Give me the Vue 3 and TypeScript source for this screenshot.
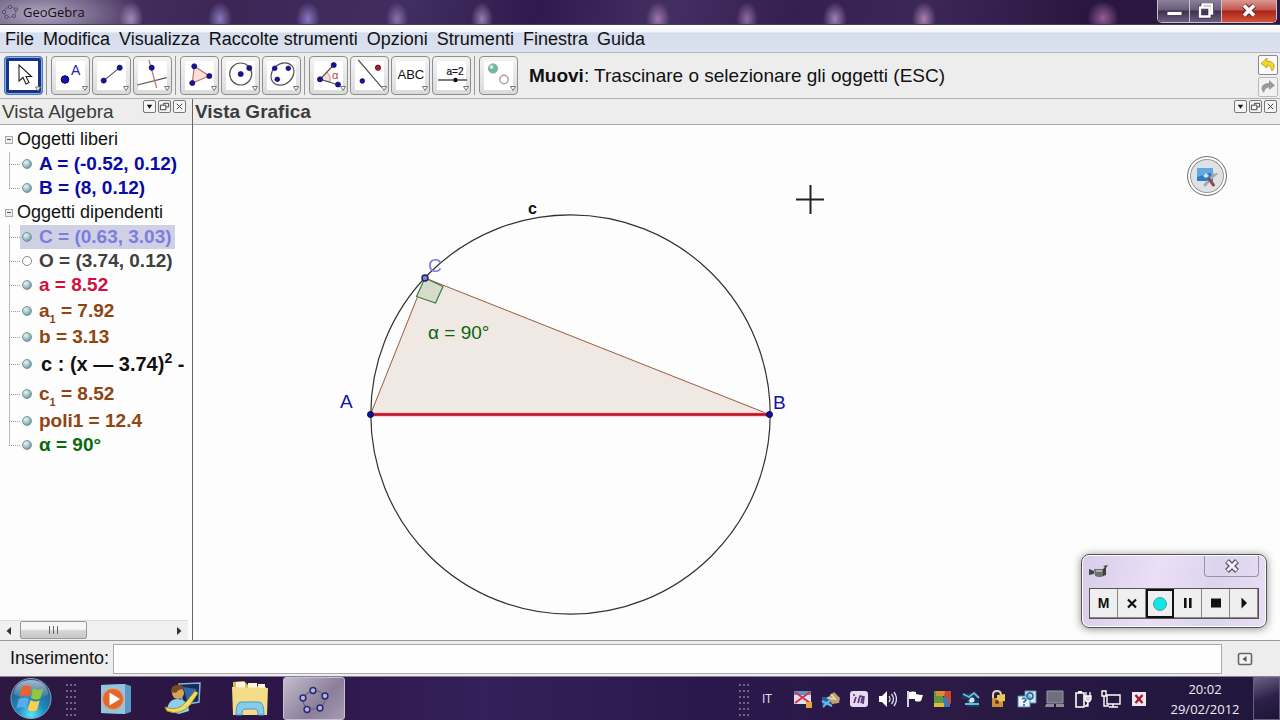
<script setup lang="ts">
import { ref } from 'vue'

interface AlgebraItem {
  name: string
  sub?: string
  value: string
  sup?: string
  tail?: string
  color: string
  hidden?: boolean
  selected?: boolean
  tall?: 'sub' | 'sup'
  math?: boolean
}

interface AlgebraGroup {
  title: string
  items: AlgebraItem[]
}

const menus: string[] = ['File', 'Modifica', 'Visualizza', 'Raccolte strumenti', 'Opzioni', 'Strumenti', 'Finestra', 'Guida']

const groups: AlgebraGroup[] = [
  {
    title: 'Oggetti liberi',
    items: [
      { name: 'A', value: ' = (-0.52, 0.12)', color: '#0a0aa4' },
      { name: 'B', value: ' = (8, 0.12)', color: '#0a0aa4' },
    ],
  },
  {
    title: 'Oggetti dipendenti',
    items: [
      { name: 'C', value: ' = (0.63, 3.03)', color: '#7d7de0', selected: true },
      { name: 'O', value: ' = (3.74, 0.12)', color: '#404040', hidden: true },
      { name: 'a', value: ' = 8.52', color: '#d01040' },
      { name: 'a', sub: '1', value: ' = 7.92', color: '#8f4512', tall: 'sub' },
      { name: 'b', value: ' = 3.13', color: '#8f4512' },
      { name: 'c', value: ' : (x — 3.74)', sup: '2', tail: ' -', color: '#111', tall: 'sup', math: true },
      { name: 'c', sub: '1', value: ' = 8.52', color: '#8f4512', tall: 'sup' },
      { name: 'poli1', value: ' = 12.4', color: '#8f4512' },
      { name: 'α', value: ' = 90°', color: '#0a6a0a' },
    ],
  },
]

const command = ref('')
</script>

<template>
  <div class="desktop">
    <header class="titlebar">
      <svg class="app-icon" viewBox="0 0 18 16" aria-hidden="true">
        <ellipse cx="9" cy="8" rx="6" ry="5" fill="none" stroke="#6b6478" transform="rotate(-15 9 8)" />
        <g fill="#9a92a8" stroke="#544c60">
          <circle cx="3" cy="8" r="1.6" /><circle cx="9" cy="3" r="1.6" /><circle cx="15" cy="5.500" r="1.6" />
          <circle cx="13" cy="12" r="1.6" /><circle cx="5.500" cy="13" r="1.6" />
        </g>
      </svg>
      <span class="title">GeoGebra</span>
      <div class="window-buttons">
        <button class="wb min" type="button" aria-label="Riduci a icona">
          <svg viewBox="0 0 20 16"><rect x="3" y="8.500" width="15" height="4" fill="#fff" stroke="#3a3048" stroke-width=".8" /></svg>
        </button>
        <button class="wb max" type="button" aria-label="Ripristina">
          <svg viewBox="0 0 20 16"><path d="M6.500 4V1.500h9.500v9h-2.500M4 4.500h9.500v9H4z" fill="none" stroke="#3a3048" stroke-width="4" /><path d="M6.500 4V1.500h9.500v9h-2.500M4 4.500h9.500v9H4z" fill="none" stroke="#fff" stroke-width="2.400" /></svg>
        </button>
        <button class="wb close" type="button" aria-label="Chiudi">
          <svg viewBox="0 0 20 16"><path d="M5 2.500l10 10M15 2.500l-10 10" stroke="#5b2020" stroke-width="5.400" /><path d="M5 2.500l10 10M15 2.500l-10 10" stroke="#fff" stroke-width="3.800" /></svg>
        </button>
      </div>
    </header>

    <nav class="menubar">
      <button v-for="m in menus" :key="m" class="menu" type="button">{{ m }}</button>
    </nav>

    <div class="toolbar">
      <div class="tools">
        <div class="group">
          <button class="tool active" type="button" aria-label="Muovi">
            <svg viewBox="0 0 37 37"><path d="M14 8v16l4-3.500 3 6.500 3-1.500-3-6h5.500z" fill="#fff" stroke="#222" stroke-width="1.100" /><path class="more" d="M30.500 30h5l-2.500 4z" /></svg>
          </button>
        </div>
        <div class="group">
          <button class="tool" type="button" aria-label="Nuovo punto">
            <svg viewBox="0 0 37 37"><circle cx="13" cy="22.500" r="3.800" fill="#1414b4" stroke="#000050" /><text x="19" y="18" font-size="14" fill="#2222b0">A</text><path class="more" d="M30.500 29.500h5l-2.500 4z" /></svg>
          </button>
          <button class="tool" type="button" aria-label="Retta">
            <svg viewBox="0 0 37 37"><path class="ln" d="M10.700 23.600l16-13" /><circle class="pt" cx="10.700" cy="23.600" r="2.600" /><circle class="pt" cx="26.700" cy="10.700" r="2.600" /><path class="more" d="M30.500 29.500h5l-2.500 4z" /></svg>
          </button>
          <button class="tool" type="button" aria-label="Retta perpendicolare">
            <svg viewBox="0 0 37 37"><path class="ln" d="M3.300 28l29.400-7.300" /><path d="M15 3l7.700 28" stroke="#c07868" stroke-width="1.200" /><circle class="pt" cx="17.700" cy="10.700" r="2.600" /><path class="more" d="M30.500 29.500h5l-2.500 4z" /></svg>
          </button>
        </div>
        <div class="group">
          <button class="tool" type="button" aria-label="Poligono">
            <svg viewBox="0 0 37 37"><path d="M13.300 9.300L28.300 19l-17 7z" fill="#fbe0dc" stroke="#c07070" stroke-width="1.200" /><circle class="pt" cx="13.300" cy="9.300" r="2.600" /><circle class="pt" cx="28.300" cy="19" r="2.600" /><circle class="pt" cx="11.300" cy="26" r="2.600" /><path class="more" d="M30.500 29.500h5l-2.500 4z" /></svg>
          </button>
          <button class="tool" type="button" aria-label="Circonferenza">
            <svg viewBox="0 0 37 37"><circle class="ln" cx="18.700" cy="17" r="11" /><circle class="pt" cx="18.700" cy="17" r="2.600" /><circle class="pt" cx="27.300" cy="11" r="2.600" /><path class="more" d="M30.500 29.500h5l-2.500 4z" /></svg>
          </button>
          <button class="tool" type="button" aria-label="Conica">
            <svg viewBox="0 0 37 37"><ellipse class="ln" cx="19.500" cy="17" rx="12.500" ry="10" transform="rotate(-42 19.500 17)" /><circle class="pt" cx="11.700" cy="11.300" r="2.400" /><circle class="pt" cx="25.300" cy="11.300" r="2.400" /><circle class="pt" cx="14.300" cy="22.300" r="2.400" /><path class="more" d="M30.500 29.500h5l-2.500 4z" /></svg>
          </button>
        </div>
        <div class="group">
          <button class="tool" type="button" aria-label="Angolo">
            <svg viewBox="0 0 37 37"><path d="M10 22.300l7-7.300q4.500 4 3 10z" fill="#fbdcd8" stroke="#d09090" /><path class="ln" d="M23.700 8L10 22.300l18 5.400" /><text x="22" y="21.500" font-size="11" fill="#c04040">α</text><circle class="pt" cx="10" cy="22.300" r="2.600" /><circle class="pt" cx="23.700" cy="8" r="2.600" /><circle class="pt" cx="28" cy="27.500" r="2.600" /><path class="more" d="M30.500 29.500h5l-2.500 4z" /></svg>
          </button>
          <button class="tool" type="button" aria-label="Simmetria assiale">
            <svg viewBox="0 0 37 37"><path class="ln" d="M7.300 3l23.400 27.300" /><circle cx="27" cy="10.700" r="2.600" fill="#a82030" stroke="#701020" /><circle class="pt" cx="11.300" cy="24" r="2.400" /><path class="more" d="M30.500 29.500h5l-2.500 4z" /></svg>
          </button>
          <button class="tool" type="button" aria-label="Testo">
            <svg viewBox="0 0 37 37"><text x="5.500" y="21.500" font-size="13" fill="#111">ABC</text><path class="more" d="M30.500 29.500h5l-2.500 4z" /></svg>
          </button>
          <button class="tool" type="button" aria-label="Slider">
            <svg viewBox="0 0 37 37"><text x="13.500" y="18" font-size="10" fill="#111" stroke="#111" stroke-width=".2">a=2</text><path d="M5 23h29" stroke="#222" stroke-width="1.200" /><circle cx="22.500" cy="23" r="2.200" fill="#111" /><path class="more" d="M30.500 29.500h5l-2.500 4z" /></svg>
          </button>
        </div>
        <div class="group">
          <button class="tool" type="button" aria-label="Mostra oggetto">
            <svg viewBox="0 0 37 37"><circle cx="13" cy="11.500" r="4.600" fill="#6db8a4" stroke="#8fa8a0" /><circle cx="11.500" cy="10" r="2" fill="#c8ece2" /><circle cx="24" cy="22.500" r="4.200" fill="#fff" stroke="#a8a098" stroke-width="1.400" /><path class="more" d="M30.500 29.500h5l-2.500 4z" /></svg>
          </button>
        </div>
      </div>
      <p class="tool-help"><b>Muovi</b>: Trascinare o selezionare gli oggetti (ESC)</p>
      <div class="history">
        <button class="hist" type="button" aria-label="Annulla">
          <svg viewBox="0 0 18 18"><path d="M8 2L2 7.500 8 12V9.500q4-.5 5 5.500 3-3 2-6.500Q13.500 5 8 5z" fill="#f0d820" stroke="#b89a20" stroke-width=".8" /></svg>
        </button>
        <button class="hist off" type="button" aria-label="Ripristina azione">
          <svg viewBox="0 0 18 18"><path d="M10 2l6 5.500L10 12V9.500Q6 9.500 5 15 1.500 12 3 8.500 4.500 5 10 5z" fill="#9a9a9a" /></svg>
        </button>
      </div>
    </div>

    <main class="views">
      <section class="algebra">
        <div class="view-head">
          <h2 class="light">Vista Algebra</h2>
          <div class="view-buttons">
            <button type="button" aria-label="Menu vista"><svg viewBox="0 0 12 12"><path d="M3 4h6L6 8.500z" fill="#111" /></svg></button>
            <button type="button" aria-label="Stacca vista"><svg viewBox="0 0 12 12"><path d="M1.500 4.500h6v5h-6zM5 4V2.500h5.500v4H8" fill="none" stroke="#333" /></svg></button>
            <button type="button" aria-label="Chiudi vista"><svg viewBox="0 0 12 12"><path d="M3 3l6 6M9 3L3 9" stroke="#333" /></svg></button>
          </div>
        </div>
        <div class="tree">
          <div v-for="g in groups" :key="g.title" class="branch">
            <div class="branch-title"><button class="fold" type="button" :aria-label="g.title"></button>{{ g.title }}</div>
            <ul>
              <li v-for="(it, i) in g.items" :key="i" :class="it.tall">
                <span class="twig"></span>
                <span class="entry" :class="{ selected: it.selected }">
                  <span class="marble" :class="{ hollow: it.hidden }"></span>
                  <span class="formula" :class="{ math: it.math }" :style="{ color: it.color }">{{ it.name }}<sub v-if="it.sub">{{ it.sub }}</sub>{{ it.value }}<sup v-if="it.sup">{{ it.sup }}</sup>{{ it.tail }}</span>
                </span>
              </li>
            </ul>
          </div>
        </div>
        <div class="hscroll">
          <button type="button" aria-label="Scorri a sinistra"><svg viewBox="0 0 20 18"><path d="M11 5v8L6.500 9z" fill="#333" /></svg></button>
          <div class="track"><div class="thumb"><i></i><i></i><i></i></div></div>
          <button type="button" aria-label="Scorri a destra"><svg viewBox="0 0 20 18"><path d="M9 5v8l4.500-4z" fill="#333" /></svg></button>
        </div>
      </section>

      <section class="graphics">
        <div class="view-head">
          <h2>Vista Grafica</h2>
          <div class="view-buttons">
            <button type="button" aria-label="Menu vista"><svg viewBox="0 0 12 12"><path d="M3 4h6L6 8.500z" fill="#111" /></svg></button>
            <button type="button" aria-label="Stacca vista"><svg viewBox="0 0 12 12"><path d="M1.500 4.500h6v5h-6zM5 4V2.500h5.500v4H8" fill="none" stroke="#333" /></svg></button>
            <button type="button" aria-label="Chiudi vista"><svg viewBox="0 0 12 12"><path d="M3 3l6 6M9 3L3 9" stroke="#333" /></svg></button>
          </div>
        </div>
        <div class="canvas">
          <svg class="drawing">
            <path d="M177.500 289.500L232 153l344.500 136.500z" fill="#f0e9e3" stroke="#9a5a3c" stroke-width="1" />
            <path d="M232 153l18 8.500-7.500 16.500-19-6.500z" fill="#d5dccb" stroke="#3f7a3f" stroke-width="1.200" />
            <circle cx="377.500" cy="289.500" r="199.700" fill="none" stroke="#333" stroke-width="1.200" />
            <path d="M177.500 289.500h399" stroke="#f3a8ae" stroke-width="4" />
            <path d="M177.500 289.500h399" stroke="#b8101c" stroke-width="2.600" />
            <circle cx="177.500" cy="289.500" r="3" fill="#1010a8" stroke="#04043c" />
            <circle cx="576.500" cy="289.500" r="3" fill="#1010a8" stroke="#04043c" />
            <circle cx="232" cy="153" r="3" fill="#8080e8" stroke="#20205c" stroke-width="1.400" />
            <text x="147" y="283" fill="#1414a0">A</text>
            <text x="580" y="284" fill="#1414a0">B</text>
            <text x="235" y="147" fill="#8080dc">C</text>
            <text x="235" y="214" fill="#0a6410">α = 90°</text>
            <text class="circle-name" x="335" y="89" fill="#111">c</text>
            <path d="M603 74.500h28M617.500 60v29" stroke="#222" stroke-width="2" />
          </svg>
          <button class="style-button" type="button" aria-label="Opzioni vista">
            <svg viewBox="0 0 32 32">
              <rect x="6" y="8" width="16" height="13" fill="#2d7cc8" /><path d="M6 8h16v4L6 17z" fill="#62a8e0" />
              <path d="M12 16l3-3 3 3-3 2z" fill="#cfe6f6" />
              <path d="M14 25l9-10" stroke="#a4a8b0" stroke-width="3" stroke-linecap="round" />
              <path d="M20.500 12.500l2.500 3 3.500-2" fill="none" stroke="#a4a8b0" stroke-width="2" />
              <path d="M18 19l4.500 6" stroke="#8a4c4c" stroke-width="3" stroke-linecap="round" />
            </svg>
          </button>
        </div>
      </section>
    </main>

    <form class="inputbar" @submit.prevent>
      <label for="command">Inserimento:</label>
      <input id="command" v-model="command" type="text" autocomplete="off" />
      <button type="button" aria-label="Comandi"><svg viewBox="0 0 16 14"><rect x="1.500" y="1.500" width="13" height="11" rx="1.500" fill="#f4f4f4" stroke="#666" stroke-width="1.600" /><path d="M9.500 4v6L5.500 7z" fill="#555" /></svg></button>
    </form>

    <footer class="taskbar">
      <button class="start" type="button" aria-label="Start">
        <svg viewBox="0 0 44 44">
          <defs>
            <radialGradient id="orb" cx=".5" cy=".9" r=".85"><stop offset="0" stop-color="#5fe4fa" /><stop offset=".4" stop-color="#1c8cc0" /><stop offset="1" stop-color="#28507c" /></radialGradient>
            <linearGradient id="gloss" x1="0" y1="0" x2="0" y2="1"><stop offset="0" stop-color="#fff" stop-opacity=".6" /><stop offset="1" stop-color="#fff" stop-opacity=".04" /></linearGradient>
          </defs>
          <circle cx="22" cy="22" r="20.500" fill="url(#orb)" stroke="#7fa4c0" />
          <path d="M4 18Q6 3 22 3t18 15q-9 5-18 4T4 18z" fill="url(#gloss)" />
          <path d="M13 10q5-3 9.500.5l-2 10q-5-3-10.500 0z" fill="#e8642c" />
          <path d="M24 11.500q5 3 10.500.5l-3 10q-4.500 2.500-9.500-.5z" fill="#94c83c" />
          <path d="M9.500 22.500q5.500-3 10.500 0l-3 10q-4.500-3-10 0z" fill="#58acec" />
          <path d="M21.500 23.500q4.500 3 9.500.5l-3 10q-4.500 2.500-9.500-.5z" fill="#fcd048" />
        </svg>
      </button>
      <span class="grip"></span>
      <div class="pinned">
        <button class="task" type="button" aria-label="Media Player">
          <svg viewBox="0 0 40 40"><path d="M5 6l24-1 6 2v26l-6 2-24-1z" fill="#5c98c4" /><path d="M5 6l24-1v30l-24-1z" fill="#94c4e0" /><circle cx="17" cy="20" r="10.500" fill="#e4682c" stroke="#f0a060" /><path d="M13.500 13.500v13L24 20z" fill="#fff" /></svg>
        </button>
        <button class="task" type="button" aria-label="Messenger">
          <svg viewBox="0 0 40 40"><path d="M16 5l21-1-1 19-16 3z" fill="#142c58" stroke="#8ab4dc" stroke-width="1.500" /><path d="M20 8l14 2-10 11z" fill="#3468a8" /><circle cx="15" cy="14" r="6" fill="#d8a458" /><path d="M8 13q0-8 8-7 5 0 5 4-6 0-8 4z" fill="#7a4a20" /><path d="M4 32q1-12 10-12 11 0 12 12l-10 3z" fill="#8cd0ec" /><path d="M2 28q13 5 21-5l9-11 3 2-8 12q-10 11-23 6z" fill="#f0dc68" stroke="#b89020" /></svg>
        </button>
        <button class="task" type="button" aria-label="Esplora risorse">
          <svg viewBox="0 0 40 40"><path d="M3 3l11-1 4 4 18 2v28H3z" fill="#e0b850" /><path d="M6 3h9v6H6zM18 4h9v5h-9zM28 5h7v5h-7z" fill="#fff5dc" /><path d="M2 8l36 1-1 27H3z" fill="#f4dc88" /><path d="M6 36q0-13 5-13h18q5 0 5 13h-6q0-6-3-6H15q-3 0-3 6z" fill="#88ccec" stroke="#4a98c0" /></svg>
        </button>
        <button class="task running" type="button" aria-label="GeoGebra">
          <svg viewBox="0 0 40 40"><ellipse cx="20" cy="21" rx="11" ry="9" fill="none" stroke="#6a6478" transform="rotate(-12 20 21)" /><g fill="#b4b4f4" stroke="#2c2c68" stroke-width="1.500"><circle cx="19" cy="11.500" r="2.900" /><circle cx="31" cy="17" r="2.900" /><circle cx="9" cy="19" r="2.900" /><circle cx="13" cy="30.500" r="2.900" /><circle cx="26" cy="29" r="2.900" /></g></svg>
        </button>
      </div>
      <span class="grip end"></span>
      <span class="lang">IT</span>
      <div class="tray">
        <svg viewBox="0 0 20 20"><path d="M1 2h17v13H1z" fill="#e4dcec" /><path d="M1 2h17v4H1z" fill="#6098b8" /><path d="M2 3l15 11M17 3L2 14" stroke="#d83050" stroke-width="2" /><path d="M13 13h6v6h-6z" fill="#e8a838" /></svg>
        <svg viewBox="0 0 20 20"><path d="M1 8h9v8H1z" fill="#2460a0" /><path d="M2 18l7-7M1 12l10 5" stroke="#68b8e8" stroke-width="2" /><path d="M7 8l6-5 6 6-1 5-7 1z" fill="#c0a070" /><path d="M6 9l7 1M10 5l5 6" stroke="#e8d8b0" stroke-width="1.500" /></svg>
        <svg viewBox="0 0 20 20"><rect x="1" y="2" width="18" height="16" rx="3" fill="#e8d8f0" /><path d="M5 14l2-6M9 14l2-7q4 0 2 3l-1 4M15 7l-1 8M4 6h2" stroke="#5a3a78" stroke-width="1.700" fill="none" /></svg>
        <svg viewBox="0 0 20 20"><path d="M2 7h3l5-5v16l-5-5H2z" fill="#fff" /><path d="M12 7q2 3 0 6M14.500 5q4 5 0 10M17 3q5 7 0 14" fill="none" stroke="#ddd8ea" stroke-width="1.300" /></svg>
        <svg viewBox="0 0 20 20"><path d="M3 2v16" stroke="#fff" stroke-width="1.600" /><path d="M4 3q4-1 7 0v2q3 1 7 1l-2 6q-3 1-6 0v-2H4z" fill="#fff" /></svg>
        <svg viewBox="0 0 20 20"><path d="M1 2h9v16H1z" fill="#5c9c40" /><path d="M3 2h9v5H3z" fill="#e08c34" /><path d="M10 8h7v10h-7z" fill="#3878c0" /><path d="M12 2h6v13l-4-3V8h-3z" fill="#c84830" /><path d="M1 14h10v4H1z" fill="#e4b83c" /></svg>
        <svg viewBox="0 0 20 20"><path d="M1 4h15v6H1zM6 11h12v7H6z" fill="#103c60" /><path d="M2 5l6 3 5-4 5 5M4 15h14M8 11l3 5" stroke="#70b8e0" stroke-width="1.800" fill="none" /><circle cx="11" cy="11" r="2.500" fill="#d4e8f4" /></svg>
        <svg viewBox="0 0 20 20"><path d="M4 9V6q0-4 4-4t4 4v2" fill="none" stroke="#d8d0c0" stroke-width="2" /><path d="M3 9h11v9H3z" fill="#d09038" /><path d="M8 6l8-1v7l-8 1z" fill="#ecc850" /><circle cx="8" cy="13" r="2" fill="#5c3a20" /></svg>
        <svg viewBox="0 0 20 20"><path d="M8 2h11v12H8z" fill="#d8e8f0" stroke="#5c90b0" /><path d="M1 7h12v11H1z" fill="#f0f4f8" stroke="#4888b0" /><circle cx="13" cy="7" r="3" fill="none" stroke="#2878a8" stroke-width="1.800" /><path d="M5 10q3-2 4 1l-2 2v1M7 15v2" stroke="#2878b8" stroke-width="1.800" fill="none" /></svg>
        <svg viewBox="0 0 20 20"><path d="M2 2h16v12H2z" fill="#70707c" stroke="#9a9aa8" /><path d="M1 15h8v3H0zM11 15h8v3h-8z" fill="#8c8c98" /></svg>
        <svg viewBox="0 0 20 20"><path d="M3 4h8v14H3z" fill="#2a2040" stroke="#fff" stroke-width="1.600" /><path d="M5 2h4v2H5z" fill="#fff" /><path d="M13 3v4M17 3v4M12 7h6v3q-1 3-3 3t-3-3zM15 13v4h-3" stroke="#fff" stroke-width="1.300" fill="#fff" fill-opacity=".8" /></svg>
        <svg viewBox="0 0 20 20"><path d="M6 6h13v9H6z" fill="#241a3c" stroke="#fff" stroke-width="1.400" /><path d="M12 15v3M8 18h9M1 2h4v5H1zM3 7v10h5" fill="none" stroke="#fff" stroke-width="1.400" /></svg>
        <svg viewBox="0 0 20 20"><rect x="3" y="3" width="14" height="14" fill="#eee8ee" /><path d="M6.500 6l7 8M13.500 6l-7 8" stroke="#a81828" stroke-width="2.400" /></svg>
      </div>
      <div class="clock"><time>20:02</time><time>29/02/2012</time></div>
      <button class="show-desktop" type="button" aria-label="Mostra desktop"></button>
    </footer>

    <aside class="recorder">
      <div class="rec-head">
        <svg viewBox="0 0 20 14" aria-hidden="true"><path d="M5 5h10v7q-5 2-9 0z" fill="#6c706c" /><path d="M0 5l5 2v3l-5 1zM14 2l5-1-2 3z" fill="#444" /><path d="M7 6h6v2H7z" fill="#a8b4a8" /><path d="M14 5l3-3v9l-3 1z" fill="#3c403c" /></svg>
        <button type="button" aria-label="Chiudi registratore"><svg viewBox="0 0 18 16"><path d="M4 3l10 10M14 3L4 13" stroke="#555060" stroke-width="5.400" /><path d="M4.500 3.500l9 9M13.500 3.500l-9 9" stroke="#f6f2fa" stroke-width="3" /></svg></button>
      </div>
      <div class="rec-keys">
        <button type="button">M</button>
        <button type="button" aria-label="Annulla registrazione"><svg viewBox="0 0 20 20"><path d="M6 6.500l8 8M14 6.500l-8 8" stroke="#111" stroke-width="2.200" /></svg></button>
        <button class="on" type="button" aria-label="Registra"><svg viewBox="0 0 20 20"><circle cx="10" cy="10" r="6.500" fill="#10e8e8" stroke="#50a0a0" /></svg></button>
        <button type="button" aria-label="Pausa"><svg viewBox="0 0 20 20"><path d="M6 5h2.600v10H6zM11 5h2.600v10H11z" fill="#111" /></svg></button>
        <button type="button" aria-label="Ferma"><svg viewBox="0 0 20 20"><path d="M5 5.500h10v9H5z" fill="#111" /></svg></button>
        <button type="button" aria-label="Riproduci"><svg viewBox="0 0 20 20"><path d="M7.500 4.500l5.500 5.500-5.500 5.500z" fill="#111" /></svg></button>
      </div>
    </aside>
  </div>
</template>

<style>
html, body { height: 100%; }
body { margin: 0; background: #ededed; }
</style>

<style scoped>
* { box-sizing: border-box; }
button { margin: 0; padding: 0; border: 0; background: none; font: inherit; color: inherit; }
svg { display: block; }
.desktop {
  position: relative;
  display: flex;
  flex-direction: column;
  min-height: 100vh;
  font-family: "Liberation Sans", Arial, sans-serif;
  font-size: 18px;
  color: #111;
  background: #ededed;
}
.titlebar {
  display: flex;
  align-items: center;
  height: 25px;
  padding: 0 3px 0 1px;
  border-bottom: 1px solid #4a4058;
  background:
    radial-gradient(ellipse 105px 36px at 40px 14px, rgba(190, 178, 204, .9), transparent),
    radial-gradient(ellipse 12px 17px at 131px 19px, #a284b6, transparent),
    radial-gradient(ellipse 12px 17px at 220px 19px, #8878ba, transparent),
    radial-gradient(ellipse 12px 17px at 308px 19px, #8878c0, transparent),
    radial-gradient(ellipse 11px 17px at 397px 19px, #8c70aa, transparent),
    radial-gradient(ellipse 11px 17px at 482px 19px, #9a7ca8, transparent),
    radial-gradient(ellipse 12px 17px at 658px 19px, #9c78ac, transparent),
    radial-gradient(ellipse 11px 17px at 747px 19px, #8c6ca0, transparent),
    radial-gradient(ellipse 12px 17px at 835px 19px, #a280b4, transparent),
    radial-gradient(ellipse 12px 17px at 924px 19px, #a880b0, transparent),
    radial-gradient(ellipse 16px 17px at 1103px 18px, #965c98, transparent),
    linear-gradient(100deg, #4a3862 0%, #3b2656 18%, #412e60 32%, #2e1a4c 42%, #432f62 52%, #341f50 62%, #3c2858 72%, #28163f 85%, #2c1a46 100%);
}
.app-icon { width: 18px; height: 16px; }
.title { margin-left: 4px; font: 13px/24px "Open Sans", "Noto Sans", sans-serif; color: #111; }
.window-buttons {
  display: flex;
  align-self: flex-start;
  height: 23px;
  margin-left: auto;
  border: 1px solid #c8c0d0;
  border-top: 0;
  border-radius: 0 0 5px 5px;
  overflow: hidden;
}
.wb { display: grid; place-items: center; width: 32px; background: linear-gradient(#8c8098, #6a5c7c 45%, #40304f 50%, #6c5c80); border-right: 1px solid #c8c0d0; }
.wb svg { width: 20px; height: 16px; }
.wb.close { width: 54px; border-right: 0; background: linear-gradient(#d89890, #c25850 45%, #a82418 50%, #d45438); }
.menubar {
  display: flex;
  gap: 9px;
  height: 28px;
  padding: 0 5px;
  border-bottom: 1px solid #b8b8c4;
  background: linear-gradient(#fff 0, #f4f6fa 25%, #d4ddec 30%, #dde1f0 100%);
}
.menu { font-size: 18px; line-height: 28px; color: #111; }
.toolbar { display: flex; align-items: center; height: 46px; padding: 0 2px 0 4px; border-bottom: 1px solid #b0b0b0; background: #ededed; }
.tools { display: flex; }
.group { display: flex; gap: 2px; }
.group + .group { margin-left: 3px; padding-left: 4px; border-left: 1px solid #999; }
.tool { width: 39px; height: 39px; border: 1px solid #8e8e8e; border-radius: 4px; background: linear-gradient(#fff, #fff) center / 29px 29px no-repeat, linear-gradient(#f4f4f4, #dadada); }
.tool.active { border-color: #4a7ac0; background: linear-gradient(#fff, #fff) center / 29px 29px no-repeat, #18328c; box-shadow: inset 0 0 0 1px #8ab0dc; }
.tool svg { width: 37px; height: 37px; font-family: "Liberation Sans", Arial, sans-serif; }
.ln { fill: none; stroke: #555; stroke-width: 1.2; }
.pt { fill: #1414a0; stroke: #080850; stroke-width: .6; }
.more { fill: #fff; stroke: #777; stroke-width: 1; }
.tool-help { flex: 1; margin: 0 0 0 11px; font-size: 19px; line-height: 24px; }
.history { display: flex; flex-direction: column; gap: 2px; }
.hist { width: 20px; height: 20px; border: 1px solid #888; border-radius: 2px; background: #fafafa; }
.hist.off { border-color: #bbb; background: #f2f2f2; }
.hist svg { width: 18px; height: 18px; }
.views { display: flex; flex: 1; }
.algebra { display: flex; flex-direction: column; width: 193px; border-right: 1px solid #666; background: #fdfdfd; }
.graphics { display: flex; flex: 1; flex-direction: column; min-width: 0; }
.view-head { display: flex; justify-content: space-between; height: 26px; padding: 0 3px 0 2px; border-bottom: 1px solid #a8a8a8; background: #ededed; }
.algebra .view-head { padding-right: 6px; }
h2 { margin: 0; font-size: 19px; line-height: 26px; font-weight: bold; color: #3c3c3c; white-space: nowrap; }
h2.light { font-weight: normal; }
.view-buttons { display: flex; gap: 2px; margin-top: 1px; }
.view-buttons button { width: 13px; height: 13px; border: 1px solid #777; border-radius: 2px; background: #f6f6f6; }
.view-buttons svg { width: 11px; height: 11px; }
.tree { flex: 1; padding-top: 2px; margin-right: 4px; overflow: hidden; white-space: nowrap; }
.branch-title { display: flex; align-items: center; height: 25px; padding-left: 5px; gap: 4px; color: #111; }
.fold { width: 8px; height: 8px; border: 1px solid #aaa; background: linear-gradient(#555, #555) center / 4px 1px no-repeat, #eee; }
ul { margin: 0; padding: 0 0 0 9px; list-style: none; }
li { display: flex; align-items: center; height: 24px; background: linear-gradient(#bbb, #bbb) left / 1px 100% no-repeat; }
li:last-child { background-size: 1px 50%; background-position: left top; }
li.sub { height: 28px; }
li.sup { height: 30px; }
.twig { flex: none; width: 11px; border-top: 1px dotted #999; }
.entry { display: flex; align-items: center; gap: 7px; height: 24px; padding: 0 3px 0 2px; }
.entry.selected { background: #d0d0e4; }
.marble { flex: none; width: 10px; height: 10px; border: 1px solid #7c9498; border-radius: 50%; background: radial-gradient(circle at 35% 30%, #e8f8fa, #8ab4b8 60%, #50787c); }
.marble.hollow { background: #fff; border-color: #888; }
.formula { font-size: 19px; line-height: 24px; font-weight: bold; white-space: pre; }
.formula.math { padding-left: 2px; font-size: 20px; }
sub, sup { font-size: 11px; line-height: 0; }
sub { vertical-align: -6px; }
sup { font-size: 14px; vertical-align: 8px; }
.hscroll { display: flex; height: 20px; margin-right: 4px; border-top: 1px solid #ddd; background: #f0f0f0; }
.hscroll button { width: 20px; }
.hscroll svg { width: 20px; height: 18px; }
.track { flex: 1; padding-bottom: 1px; }
.thumb { display: flex; align-items: center; justify-content: center; gap: 3px; width: 45%; height: 100%; border: 1px solid #999; border-radius: 2px; background: linear-gradient(#f6f6f6 45%, #d4d4d4 55%, #c8c8c8); }
.thumb i { width: 1px; height: 8px; background: #666; }
.canvas { position: relative; flex: 1; min-height: 500px; background: #fdfdfd; }
.drawing { width: 100%; height: 100%; font-size: 19px; }
.circle-name { font-size: 16px; font-weight: bold; }
.style-button { position: absolute; top: 31px; right: 53px; display: grid; place-items: center; width: 40px; height: 40px; border: 1px solid #777; border-radius: 50%; background: #dfe2e4; box-shadow: inset 0 0 0 2px #fff, inset 0 0 0 3px #999; }
.style-button svg { width: 32px; height: 32px; }
.inputbar { display: flex; align-items: center; height: 36px; padding: 0 27px 0 10px; border-top: 1px solid #999; background: #ededed; }
.inputbar label { width: 103px; }
.inputbar input { flex: 1; min-width: 0; height: 30px; padding: 0 6px; border: 1px solid #aaa; font: inherit; background: #fefefe; outline: none; }
.inputbar button { margin-left: 15px; }
.inputbar button svg { width: 16px; height: 14px; }
.taskbar { display: flex; align-items: center; height: 44px; padding-left: 9px; border-top: 1px solid #8c8098; background: linear-gradient(90deg, #2c1840, #2b1646 20%, #34205a 38%, #2a184c 55%, #2a1a44 75%, #20163c); }
.start, .start svg { width: 44px; height: 43px; }
.grip { width: 11px; height: 34px; margin: 0 0 0 12px; background: radial-gradient(circle, #70628a 1px, transparent 1px) 0 0 / 4px 6px; }
.pinned { display: flex; height: 100%; margin-left: 6px; }
.task { display: grid; place-items: center; width: 67px; }
.task svg { width: 40px; height: 40px; }
.task.running { width: 62px; border: 1px solid #c8c0d0; border-radius: 3px; background: linear-gradient(135deg, #c4bccc, #8a7e9a 60%, #a69cb2); }
.grip.end { margin-left: auto; }
.lang { width: 36px; text-align: center; font: 12px/20px "Open Sans", "Noto Sans", sans-serif; color: #e8e4f0; }
.tray { display: flex; gap: 8px; margin-left: 8px; }
.tray svg { width: 20px; height: 20px; }
.clock { display: flex; flex-direction: column; width: 96px; margin-left: 8px; text-align: center; font: 13px/20px "Open Sans", "Noto Sans", sans-serif; color: #f0ecf6; }
.show-desktop { width: 27px; height: 100%; border: 1px solid #6a5c80; background: linear-gradient(160deg, #6c6284, #2c2048 50%, #1c1434); }
.recorder {
  position: absolute;
  right: 13px;
  bottom: 92px;
  width: 186px;
  padding: 1px 7px 8px;
  border: 1px solid #555;
  border-radius: 8px;
  background: linear-gradient(100deg, #d8cdea, #ebdff6 40%, #dcd4ee 70%, #e8def4);
  box-shadow: 0 0 0 1px #fff inset, 0 1px 8px rgba(0, 0, 0, .45);
}
.rec-head { display: flex; justify-content: space-between; height: 32px; }
.rec-head > svg { width: 20px; height: 14px; margin-top: 8px; }
.rec-head button { display: grid; place-items: center; width: 55px; height: 21px; border: 1px solid #9a90aa; border-top: 0; border-radius: 0 0 4px 4px; }
.rec-head button svg { width: 18px; height: 16px; }
.rec-keys { display: grid; grid-template-columns: repeat(6, 1fr); height: 31px; border: 1px solid #555; background: #efefef; }
.rec-keys button { display: grid; place-items: center; border-right: 1px solid #888; border-bottom: 1px solid #888; font-size: 14px; font-weight: bold; }
.rec-keys button.on { border: 2px solid #111; }
.rec-keys svg { width: 20px; height: 20px; }
</style>
